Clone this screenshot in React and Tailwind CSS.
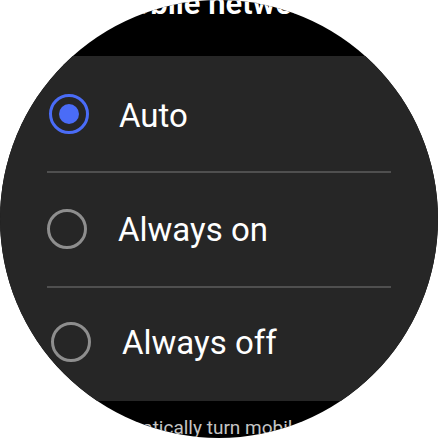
import React, { useState } from 'react';

const options = [
    { id: 'auto', label: 'Auto', row: 'h-[115px] pl-[49px] gap-[30px]', text: 'pt-[4px]' },
    { id: 'on', label: 'Always on', row: 'h-[113px] pb-[2px] pl-[47px] gap-[31px]', text: 'pt-[2px]' },
    { id: 'off', label: 'Always off', row: 'h-[113px] pb-[5px] pl-[51px] gap-[31px]', text: 'pt-[1px]' },
];

// Material style radio button
const Radio = ({ checked }) => (
    <div
        className={`w-[40px] h-[40px] shrink-0 rounded-full border-[3px] flex items-center justify-center ${checked ? 'border-[#4a6cf7]' : 'border-[#8e8e8e]'
            }`}
    >
        {checked && <div className="w-[20px] h-[20px] rounded-full bg-[#4a6cf7]" />}
    </div>
);

const App = () => {
    const [selected, setSelected] = useState('auto');

    return (
        <div className="w-[438px] h-[438px] bg-white" style={{ fontFamily: 'Roboto, "Noto Sans", sans-serif' }}>
            <div className="w-[438px] h-[438px] rounded-full bg-black overflow-hidden flex flex-col">
                {/* Title, scrolled mostly off screen */}
                <div className="h-[56px] shrink-0 flex justify-center">
                    <span className="mt-[-11px] pl-[4px] text-[31px] leading-[30px] font-semibold text-white whitespace-nowrap">
                        Mobile networks
                    </span>
                </div>

                {/* Options card */}
                <div className="h-[345px] shrink-0 bg-[#262626] flex flex-col">
                    {options.map((opt, i) => (
                        <React.Fragment key={opt.id}>
                            {i > 0 && <div className="h-[2px] shrink-0 mx-[47px] bg-[#4f4f4f]" />}
                            <button
                                onClick={() => setSelected(opt.id)}
                                className={`shrink-0 flex items-center text-left ${opt.row}`}
                            >
                                <Radio checked={selected === opt.id} />
                                <span className={`text-[33px] leading-none text-white whitespace-nowrap ${opt.text}`}>
                                    {opt.label}
                                </span>
                            </button>
                        </React.Fragment>
                    ))}
                </div>

                {/* Description */}
                <p className="mt-[17px] pl-[86px] text-[19px] leading-[19px] text-[#c4c4c4] whitespace-nowrap">
                    Automatically turn mobile networks on or off
                </p>
            </div>
        </div>
    );
};

export default App;
